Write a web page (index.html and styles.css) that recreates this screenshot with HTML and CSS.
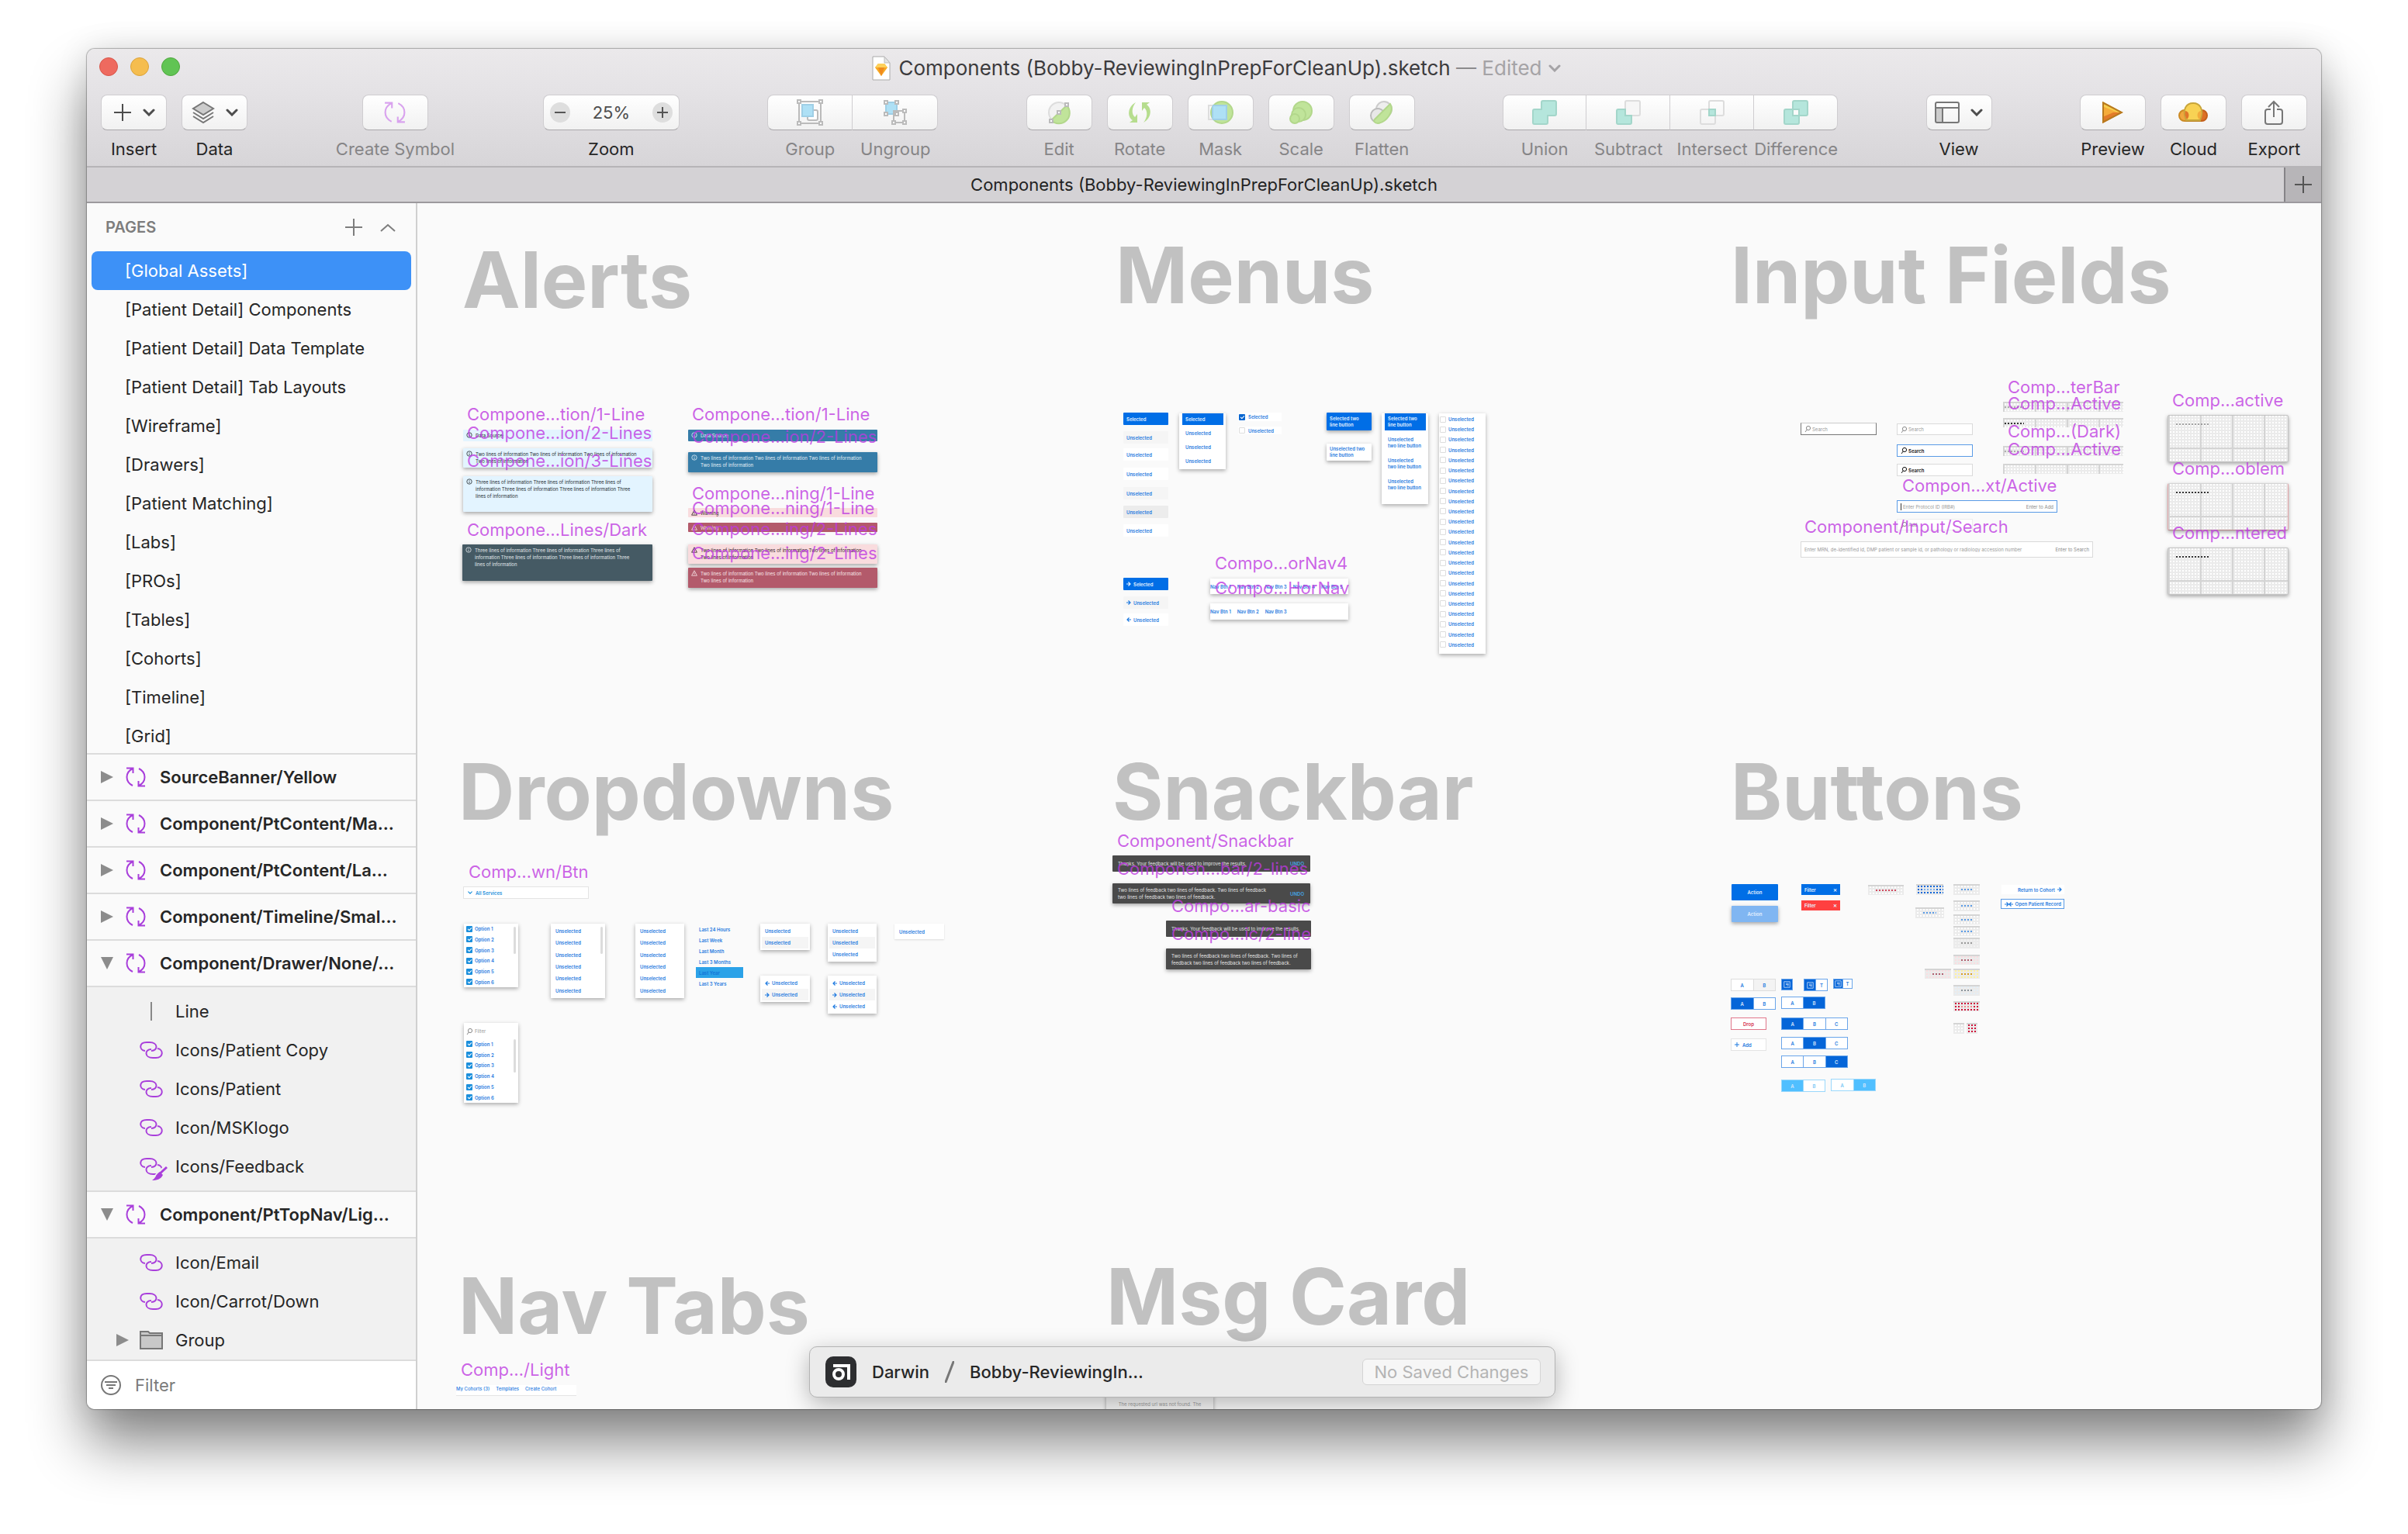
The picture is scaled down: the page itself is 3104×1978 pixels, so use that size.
FILE: index.html
```html
<!DOCTYPE html>
<html lang="en">
<head>
<meta charset="utf-8">
<title>Components (Bobby-ReviewingInPrepForCleanUp).sketch</title>
<link rel="stylesheet" href="styles.css">
</head>
<body>
<svg class="defs" aria-hidden="true">
  <symbol id="i-cycle" viewBox="0 0 26 26"><path d="M9 24C-1 19-1 7 9 2M1 1.500H9.500V8M17 2c10 5 10 17 0 22M25 24.500H16.500V18" fill="none" stroke="currentColor" stroke-width="2"/></symbol>
  <symbol id="i-link" viewBox="0 0 30 24"><path d="M7 13C-1 12-1 2 9 2h4c11 0 11 11 2 11M23 10c8 1 8 12-2 12h-4C6 22 6 11 15 11" fill="none" stroke="currentColor" stroke-width="2"/></symbol>
  <symbol id="i-chev" viewBox="0 0 16 10"><path d="M2 2l6 6 6-6" fill="none" stroke="currentColor" stroke-width="3" stroke-linecap="round"/></symbol>
  <symbol id="i-plus" viewBox="0 0 24 24"><path d="M12 1v22M1 12h22" fill="none" stroke="currentColor" stroke-width="2"/></symbol>
  <symbol id="i-tri" viewBox="0 0 16 16"><path d="M0 0l16 8-16 8z" fill="currentColor"/></symbol>
  <symbol id="i-info" viewBox="0 0 10 10"><circle cx="5" cy="5" r="4" fill="none" stroke="currentColor"/><path d="M5 4.500V7.500M5 2.500v1" stroke="currentColor"/></symbol>
  <symbol id="i-warn" viewBox="0 0 10 10"><path d="M5 1l4.300 8H.7zM5 4v2.500M5 7.200v.8" fill="none" stroke="currentColor"/></symbol>
  <symbol id="i-find" viewBox="0 0 8 10"><circle cx="5" cy="4" r="2.600" fill="none" stroke="currentColor"/><path d="M3.200 6L1 9" stroke="currentColor"/></symbol>
  <symbol id="i-right" viewBox="0 0 6 6"><path d="M0 3h5M2.500.5L5 3 2.500 5.500" fill="none" stroke="currentColor" stroke-width="1.200"/></symbol>
  <symbol id="i-left" viewBox="0 0 6 6"><path d="M6 3H1M3.500.5L1 3l2.500 2.500" fill="none" stroke="currentColor" stroke-width="1.200"/></symbol>
  <symbol id="i-doc" viewBox="0 0 12 12"><path d="M1 1h10v10H1zM4 4h5M4 6h5M6 8h3" fill="none" stroke="currentColor"/></symbol>
</svg>

<div class="window">
  <header class="titlebar">
    <div class="lights"><button class="light red" aria-label="Close"></button><button class="light yellow" aria-label="Minimize"></button><button class="light green" aria-label="Zoom window"></button></div>
    <h1 class="title">
      <svg width="24" height="32" viewBox="0 0 24 32"><path d="M1 1h15l7 8v22H1z" fill="#fff" stroke="#aaa"/><path d="M16 1v8h7z" fill="#e4e4e4" stroke="#bbb"/><path d="M8 10h8l4 5-8 11-8-11z" fill="#f7a823"/><path d="M8 10h8l4 5H4z" fill="#fdd05a"/><path d="M8 15h8l-4 11z" fill="#f08a1d"/></svg>
      <span>Components (Bobby-ReviewingInPrepForCleanUp).sketch <span class="edited"><b>—</b> Edited</span></span>
      <svg class="edited" width="16" height="10"><use href="#i-chev"/></svg>
    </h1>
  </header>

  <div class="toolbar" role="toolbar" aria-label="Tools">
    <div class="cluster">
      <div class="tool"><button class="tb" id="t1"><svg width="24" height="24"><use href="#i-plus"/></svg><svg width="16" height="10"><use href="#i-chev"/></svg></button><label for="t1">Insert</label></div>
      <div class="tool"><button class="tb" id="t2"><svg width="30" height="30" viewBox="0 0 30 30" fill="none" stroke="#777" stroke-width="2"><path d="M15 2l13 8-13 8-13-8z" fill="#ccc"/><path d="M2 15l13 8 13-8M2 20l13 8 13-8"/></svg><svg width="16" height="10"><use href="#i-chev"/></svg></button><label for="t2">Data</label></div>
    </div>
    <div class="tool off wide"><button class="tb purple" id="t3"><svg width="28" height="28"><use href="#i-cycle"/></svg></button><label for="t3">Create Symbol</label></div>
    <div class="tool"><div class="tb zoom"><button class="round" aria-label="Zoom out"><svg width="14" height="14"><path d="M0 7h14" stroke="#555" stroke-width="2"/></svg></button><output>25%</output><button class="round" aria-label="Zoom in"><svg width="14" height="14"><path d="M0 7h14M7 0v14" stroke="#555" stroke-width="2"/></svg></button></div><span>Zoom</span></div>
    <div class="segs">
      <div class="tool off"><button class="tb" id="t4"><svg width="34" height="34" viewBox="0 0 34 34" fill="#fff" stroke="#bbb" stroke-width="2"><path d="M3 3h28v28H3z" fill="none"/><rect x="14" y="14" width="13" height="13" rx="2"/><rect x="7" y="7" width="14" height="15" fill="#aee0f5" stroke="#9fcfe6"/><path d="M1 1h4v4H1zM29 1h4v4h-4zM1 29h4v4H1zM29 29h4v4h-4z"/></svg></button><label for="t4">Group</label></div>
      <div class="tool off"><button class="tb" id="t5"><svg width="34" height="34" viewBox="0 0 34 34" fill="#fff" stroke="#bbb" stroke-width="2"><rect x="5" y="4" width="14" height="15" fill="#aee0f5" stroke="#9fcfe6"/><path d="M15 15h14v15H15z" fill="none"/><path d="M3 2h4v4H3zM17 2h4v4h-4zM3 17h4v4H3zM17 17h4v4h-4zM27 13h4v4h-4zM13 28h4v4h-4zM27 28h4v4h-4z"/></svg></button><label for="t5">Ungroup</label></div>
    </div>
    <div class="cluster">
      <div class="tool off"><button class="tb" id="t6"><svg width="32" height="32" viewBox="0 0 32 32" stroke-width="2"><circle cx="16" cy="16" r="13" fill="#f2f2f2" stroke="#ddd"/><path d="M26 7A13 13 0 0 1 6 26z" fill="#c0e49a" stroke="#b2d78b"/><path d="M4 25h4v4H4zM24 4h4v4h-4zM14 14h4v4h-4z" fill="#fff" stroke="#bbb"/></svg></button><label for="t6">Edit</label></div>
      <div class="tool off"><button class="tb" id="t7"><svg width="32" height="32" viewBox="0 0 32 32" fill="#b6dd8e"><path d="M11 3C0 9 0 22 7 26l-4 3h10V18l-3 4C5 18 6 9 11 3zM21 29c11-6 11-19 4-23l4-3H19v11l3-4c5 4 4 13-1 19z"/></svg></button><label for="t7">Rotate</label></div>
      <div class="tool off"><button class="tb" id="t8"><svg width="36" height="32" viewBox="0 0 36 32" stroke-width="2"><circle cx="20" cy="16" r="14" fill="#c0e49a" stroke="#b2d78b"/><path d="M8 7h18v18H8z" fill="#aee0f5" stroke="#9fcfe6"/><path d="M8 7H3v18h5" fill="none" stroke="#ddd"/></svg></button><label for="t8">Mask</label></div>
      <div class="tool off"><button class="tb" id="t9"><svg width="32" height="32" viewBox="0 0 32 32" fill="#c0e49a" stroke="#b2d78b" stroke-width="2"><circle cx="18" cy="14" r="12"/><circle cx="13" cy="19" r="9"/><circle cx="8" cy="24" r="6"/></svg></button><label for="t9">Scale</label></div>
      <div class="tool off"><button class="tb" id="t10"><svg width="32" height="32" viewBox="0 0 32 32" stroke-width="2"><circle cx="19" cy="12" r="10" fill="#eee" stroke="#ccc"/><circle cx="11" cy="20" r="9" fill="#e8e8e8" stroke="#bbb"/><path d="M27 5c6 9-5 24-16 25-4 0-6-3-4-5z" fill="#c0e49a" stroke="#b2d78b"/></svg></button><label for="t10">Flatten</label></div>
    </div>
    <div class="segs bool">
      <div class="tool off"><button class="tb" id="t11"><svg width="32" height="32" viewBox="0 0 32 32"><path d="M12 3q0-2 2-2h15q2 0 2 2v15q0 2-2 2h-9v9q0 2-2 2H3q-2 0-2-2V14q0-2 2-2h9z" fill="#b5e6dc" stroke="#a3d6ca" stroke-width="2"/></svg></button><label for="t11">Union</label></div>
      <div class="tool off"><button class="tb" id="t12"><svg width="32" height="32" viewBox="0 0 32 32"><rect x="12" y="1" width="19" height="19" rx="2" fill="#f6f6f6" stroke="#ddd" stroke-width="2"/><path d="M12 12v8h8v9q0 2-2 2H3q-2 0-2-2V14q0-2 2-2z" fill="#b5e6dc" stroke="#a3d6ca" stroke-width="2"/></svg></button><label for="t12">Subtract</label></div>
      <div class="tool off"><button class="tb" id="t13"><svg width="32" height="32" viewBox="0 0 32 32" fill="none" stroke="#ddd" stroke-width="2"><rect x="12" y="1" width="19" height="19" rx="2"/><rect x="1" y="12" width="19" height="19" rx="2"/><path d="M12 12h8v8h-8z" fill="#b5e6dc" stroke="#a3d6ca"/></svg></button><label for="t13">Intersect</label></div>
      <div class="tool off"><button class="tb" id="t14"><svg width="32" height="32" viewBox="0 0 32 32" fill="#b5e6dc" stroke="#a3d6ca" stroke-width="2"><rect x="12" y="1" width="19" height="19" rx="2"/><rect x="1" y="12" width="19" height="19" rx="2"/><path d="M12 12h8v8h-8z" fill="#fafafa"/></svg></button><label for="t14">Difference</label></div>
    </div>
    <div class="tool"><button class="tb" id="t15"><svg width="32" height="28" viewBox="0 0 32 28" fill="none" stroke="#777" stroke-width="2"><path d="M1 8h8v19H1z" fill="#ccc" stroke="none"/><rect x="1" y="1" width="30" height="26" rx="2"/><path d="M1 8h30M10 8v19"/></svg><svg width="16" height="10"><use href="#i-chev"/></svg></button><label for="t15">View</label></div>
    <div class="cluster">
      <div class="tool"><button class="tb" id="t16"><svg width="28" height="28" viewBox="0 0 28 28"><path d="M1 0l26 14L1 28z" fill="#f5ac3a"/><path d="M1 0l26 14h-6L1 6z" fill="#f8cf4c"/><path d="M1 28v-8l14-6h12z" fill="#dd6f26" opacity=".8"/><path d="M2 1.500L26 14 2 26.500z" fill="none" stroke="#b87a1e" stroke-width="2"/></svg></button><label for="t16">Preview</label></div>
      <div class="tool"><button class="tb" id="t17"><svg width="38" height="26" viewBox="0 0 38 26" stroke-width="2"><circle cx="8" cy="17" r="7" fill="#f0a63e" stroke="#cc8a24"/><circle cx="30" cy="17" r="7" fill="#dd6f26" stroke="#c4601c"/><path d="M9 24h20" stroke="#c0882a"/><path d="M10 23C4 8 11 1 19 1s15 7 9 22z" fill="#f8d254" stroke="#c8a53a"/><path d="M11 22C8 17 8 14 9 11c5 1 6 7 2 11z" fill="#e0762a"/><path d="M27 22c3-5 3-8 2-11-5 1-6 7-2 11z" fill="#f3ab3c"/></svg></button><label for="t17">Cloud</label></div>
      <div class="tool"><button class="tb" id="t18"><svg width="24" height="32" viewBox="0 0 24 32" fill="none" stroke="#777" stroke-width="2"><path d="M8 12H4q-3 0-3 3v13q0 3 3 3h16q3 0 3-3V15q0-3-3-3h-4M12 22V2M5 9l7-7 7 7"/></svg></button><label for="t18">Export</label></div>
    </div>
  </div>

  <div class="tabs"><button class="tab">Components (Bobby-ReviewingInPrepForCleanUp).sketch</button><button class="newtab" aria-label="New tab"><svg width="24" height="24"><use href="#i-plus"/></svg></button></div>

  <div class="main">
    <aside class="side">
      <div class="pages-head"><h2>PAGES</h2><button aria-label="Add page"><svg width="24" height="24"><use href="#i-plus"/></svg></button><button aria-label="Collapse pages"><svg width="20" height="12" viewBox="0 0 20 12"><path d="M1 11l9-8 9 8" fill="none" stroke="currentColor" stroke-width="2"/></svg></button></div>
      <nav class="pages" aria-label="Pages">
        <a href="#" class="on">[Global Assets]</a><a href="#">[Patient Detail] Components</a><a href="#">[Patient Detail] Data Template</a><a href="#">[Patient Detail] Tab Layouts</a><a href="#">[Wireframe]</a><a href="#">[Drawers]</a><a href="#">[Patient Matching]</a><a href="#">[Labs]</a><a href="#">[PROs]</a><a href="#">[Tables]</a><a href="#">[Cohorts]</a><a href="#">[Timeline]</a><a href="#">[Grid]</a>
      </nav>
      <div class="layers">
        <button class="sym"><svg class="tri"><use href="#i-tri"/></svg><svg class="cyc"><use href="#i-cycle"/></svg>SourceBanner/Yellow</button>
        <button class="sym"><svg class="tri"><use href="#i-tri"/></svg><svg class="cyc"><use href="#i-cycle"/></svg>Component/PtContent/Ma…</button>
        <button class="sym"><svg class="tri"><use href="#i-tri"/></svg><svg class="cyc"><use href="#i-cycle"/></svg>Component/PtContent/La…</button>
        <button class="sym"><svg class="tri"><use href="#i-tri"/></svg><svg class="cyc"><use href="#i-cycle"/></svg>Component/Timeline/Smal…</button>
        <button class="sym"><svg class="tri open"><use href="#i-tri"/></svg><svg class="cyc"><use href="#i-cycle"/></svg>Component/Drawer/None/…</button>
        <div class="kids">
          <button><svg class="lk" viewBox="0 0 30 24"><path d="M15 0v24" stroke="#888" stroke-width="2"/></svg>Line</button>
          <button><svg class="lk"><use href="#i-link"/></svg>Icons/Patient Copy</button>
          <button><svg class="lk"><use href="#i-link"/></svg>Icons/Patient</button>
          <button><svg class="lk"><use href="#i-link"/></svg>Icon/MSKlogo</button>
          <button><svg class="lk" viewBox="0 0 30 24" overflow="visible"><use href="#i-link" width="30" height="24"/><path d="M35 13L17 31" stroke="#f1f1f1" stroke-width="8"/><path d="M35 13L22 25" stroke="currentColor" stroke-width="3"/><path d="M26 19l4 4c-3 6-8 7-14 7 5-3 5-8 10-11z" fill="currentColor"/></svg>Icons/Feedback</button>
        </div>
        <button class="sym"><svg class="tri open"><use href="#i-tri"/></svg><svg class="cyc"><use href="#i-cycle"/></svg>Component/PtTopNav/Lig…</button>
        <div class="kids">
          <button><svg class="lk"><use href="#i-link"/></svg>Icon/Email</button>
          <button><svg class="lk"><use href="#i-link"/></svg>Icon/Carrot/Down</button>
          <button class="group"><svg class="tri"><use href="#i-tri"/></svg><svg class="lk" viewBox="0 0 30 24" fill="#c8c8c8" stroke="#777" stroke-width="2"><path d="M1 23V1h10l2 2h16v20zM1 6h28"/></svg>Group</button>
        </div>
      </div>
      <label class="filter"><svg width="26" height="26" viewBox="0 0 26 26" fill="none" stroke="#777" stroke-width="2"><circle cx="13" cy="13" r="12"/><path d="M5 9h16M7 13h12M10 17h6"/></svg><input type="text" placeholder="Filter" aria-label="Filter"></label>
    </aside>

    <main class="canvas">
      <div class="world">
        <h2 style="--x:596;--y:397">Alerts</h2>
        <h2 style="--x:1438;--y:391">Menus</h2>
        <h2 style="--x:2231;--y:391">Input Fields</h2>
        <h2 style="--x:591;--y:1057">Dropdowns</h2>
        <h2 style="--x:1434;--y:1057">Snackbar</h2>
        <h2 style="--x:2231;--y:1057">Buttons</h2>
        <h2 style="--x:591;--y:1720">Nav Tabs</h2>
        <h2 style="--x:1426;--y:1708">Msg Card</h2>

        <!-- Alerts -->
        <div class="alert sky" style="--x:597;--y:554;--w:244;--h:15"><svg><use href="#i-info"/></svg><p>Data Source:</p></div>
        <div class="alert sky lift" style="--x:597;--y:578;--w:244;--h:25"><svg><use href="#i-info"/></svg><p>Two lines of information Two lines of information Two lines of information<br>Two lines of information</p></div>
        <div class="alert sky lift" style="--x:597;--y:614;--w:244;--h:46"><svg><use href="#i-info"/></svg><p>Three lines of information Three lines of information Three lines of<br>information Three lines of information Three lines of information Three<br>lines of information</p></div>
        <div class="alert slate lift" style="--x:596;--y:702;--w:245;--h:47"><svg><use href="#i-info"/></svg><p>Three lines of information Three lines of information Three lines of<br>information Three lines of information Three lines of information Three<br>lines of information</p></div>
        <div class="alert ocean" style="--x:887;--y:554;--w:244;--h:15"><svg><use href="#i-info"/></svg><p>Data Source:</p></div>
        <div class="alert ocean lift" style="--x:887;--y:583;--w:244;--h:26"><svg><use href="#i-info"/></svg><p>Two lines of information Two lines of information Two lines of information<br>Two lines of information</p></div>
        <div class="alert pink slim" style="--x:887;--y:655;--w:244;--h:12"><svg><use href="#i-warn"/></svg><p>Warning</p></div>
        <div class="alert rose slim" style="--x:887;--y:674;--w:244;--h:12"><svg><use href="#i-warn"/></svg><p>Warning</p></div>
        <div class="alert pink lift" style="--x:887;--y:702;--w:244;--h:25"><svg><use href="#i-warn"/></svg><p>Two lines of information Two lines of information Two lines of information<br>Two lines of information</p></div>
        <div class="alert rose lift" style="--x:887;--y:732;--w:244;--h:26"><svg><use href="#i-warn"/></svg><p>Two lines of information Two lines of information Two lines of information<br>Two lines of information</p></div>
        <div class="name" style="--x:602;--y:542">Compone…tion/1-Line</div>
        <div class="name" style="--x:602;--y:566">Compone…ion/2-Lines</div>
        <div class="name" style="--x:602;--y:602">Compone…ion/3-Lines</div>
        <div class="name" style="--x:602;--y:691">Compone…Lines/Dark</div>
        <div class="name" style="--x:892;--y:542">Compone…tion/1-Line</div>
        <div class="name" style="--x:892;--y:571">Compone…ion/2-Lines</div>
        <div class="name" style="--x:892;--y:644">Compone…ning/1-Line</div>
        <div class="name" style="--x:892;--y:663">Compone…ning/1-Line</div>
        <div class="name" style="--x:892;--y:690">Compone…ing/2-Lines</div>
        <div class="name" style="--x:892;--y:721">Compone…ing/2-Lines</div>

        <!-- Menus -->
        <button class="opt sel" style="--x:1448;--y:532;--w:58;--h:16">Selected</button>
        <button class="opt g1" style="--x:1448;--y:556;--w:58;--h:16">Unselected</button>
        <button class="opt" style="--x:1448;--y:578;--w:58;--h:16">Unselected</button>
        <button class="opt" style="--x:1448;--y:603;--w:58;--h:16">Unselected</button>
        <button class="opt g1" style="--x:1448;--y:628;--w:58;--h:16">Unselected</button>
        <button class="opt g2" style="--x:1448;--y:652;--w:58;--h:16">Unselected</button>
        <button class="opt" style="--x:1448;--y:676;--w:58;--h:16">Unselected</button>
        <div class="card menu" style="--x:1520;--y:533;--w:60;--h:72"><button class="sel">Selected</button><button>Unselected</button><button>Unselected</button><button>Unselected</button></div>
        <label class="tick white" style="--x:1596;--y:532;--w:56;--h:11"><input type="checkbox" checked>Selected</label>
        <label class="tick white" style="--x:1596;--y:550;--w:56;--h:10"><input type="checkbox">Unselected</label>
        <button class="opt two sel lift" style="--x:1710;--y:532;--w:58;--h:23">Selected two<br>line button</button>
        <button class="opt two lift" style="--x:1710;--y:572;--w:58;--h:22">Unselected two<br>line button</button>
        <div class="card menu tall" style="--x:1781;--y:533;--w:60;--h:117"><button class="sel">Selected two<br>line button</button><button>Unselected<br>two line button</button><button>Unselected<br>two line button</button><button>Unselected<br>two line button</button></div>
        <div class="card checks long" style="--x:1855;--y:533;--w:60;--h:310">
          <label><input type="checkbox">Unselected</label><label><input type="checkbox">Unselected</label><label><input type="checkbox">Unselected</label><label><input type="checkbox">Unselected</label><label><input type="checkbox">Unselected</label><label><input type="checkbox">Unselected</label><label><input type="checkbox">Unselected</label><label><input type="checkbox">Unselected</label><label><input type="checkbox">Unselected</label><label><input type="checkbox">Unselected</label><label><input type="checkbox">Unselected</label><label><input type="checkbox">Unselected</label><label><input type="checkbox">Unselected</label><label><input type="checkbox">Unselected</label><label><input type="checkbox">Unselected</label><label><input type="checkbox">Unselected</label><label><input type="checkbox">Unselected</label><label><input type="checkbox">Unselected</label><label><input type="checkbox">Unselected</label><label><input type="checkbox">Unselected</label><label><input type="checkbox">Unselected</label><label><input type="checkbox">Unselected</label><label><input type="checkbox">Unselected</label>
        </div>
        <button class="opt sel" style="--x:1448;--y:745;--w:58;--h:16"><svg><use href="#i-right"/></svg>Selected</button>
        <button class="opt g1" style="--x:1448;--y:769;--w:58;--h:16"><svg><use href="#i-right"/></svg>Unselected</button>
        <button class="opt" style="--x:1448;--y:791;--w:58;--h:16"><svg><use href="#i-left"/></svg>Unselected</button>
        <div class="card hnav" style="--x:1560;--y:746;--w:178;--h:20"><a href="#">Nav Btn 1</a><a href="#">Nav Btn 2</a><a href="#">Nav Btn 3</a><a href="#">Nav Btn 4</a><a href="#">Nav Btn 5</a></div>
        <div class="card hnav" style="--x:1560;--y:778;--w:178;--h:21"><a href="#">Nav Btn 1</a><a href="#">Nav Btn 2</a><a href="#">Nav Btn 3</a></div>
        <div class="name" style="--x:1566;--y:734">Compo…orNav4</div>
        <div class="name" style="--x:1566;--y:766">Compo…HorNav</div>

        <!-- Input fields -->
        <div class="field dark" style="--x:2321;--y:545;--w:98;--h:16"><svg><use href="#i-find"/></svg><input placeholder="Search" aria-label="Search"></div>
        <div class="field" style="--x:2445;--y:546;--w:98;--h:15"><svg><use href="#i-find"/></svg><input placeholder="Search" aria-label="Search"></div>
        <div class="field focus ink" style="--x:2445;--y:573;--w:98;--h:16"><svg><use href="#i-find"/></svg><input value="Search" aria-label="Search"></div>
        <div class="field ink" style="--x:2445;--y:598;--w:98;--h:16"><svg><use href="#i-find"/></svg><input value="Search" aria-label="Search"></div>
        <div class="field focus" style="--x:2445;--y:645;--w:207;--h:16"><i class="caret"></i><input placeholder="Enter Protocol ID (IRB#)" aria-label="Protocol ID"><span>Enter to Add</span></div>
        <div class="field faint" style="--x:2445;--y:669;--w:98;--h:15"><svg><use href="#i-find"/></svg><input placeholder="Add" aria-label="Add"></div>
        <div class="field" style="--x:2321;--y:698;--w:377;--h:21"><input placeholder="Enter MRN, de-identified id, DMP patient or sample id, or pathology or radiology accession number" aria-label="Patient search"><span>Enter to Search</span></div>
        <div class="mesh cols" style="--x:2582;--y:518;--w:155;--h:13"><i class="dash soft"></i></div>
        <div class="mesh cols" style="--x:2582;--y:539;--w:155;--h:12"><i class="dash"></i></div>
        <div class="mesh cols" style="--x:2582;--y:575;--w:155;--h:13"><i class="dash soft"></i></div>
        <div class="mesh cols" style="--x:2582;--y:598;--w:155;--h:13"></div>
        <div class="mesh cols box lift" style="--x:2794;--y:535;--w:156;--h:61"><i class="dash soft"></i></div>
        <div class="mesh cols box lift bad" style="--x:2794;--y:623;--w:156;--h:61"><i class="dash"></i></div>
        <div class="mesh cols box lift" style="--x:2794;--y:706;--w:156;--h:61"><i class="dash"></i></div>
        <div class="name" style="--x:2588;--y:507">Comp…terBar</div>
        <div class="name" style="--x:2588;--y:528">Comp…Active</div>
        <div class="name" style="--x:2588;--y:564">Comp…(Dark)</div>
        <div class="name" style="--x:2588;--y:587">Comp…Active</div>
        <div class="name" style="--x:2452;--y:634">Compon…xt/Active</div>
        <div class="name" style="--x:2326;--y:687">Component/Input/Search</div>
        <div class="name" style="--x:2800;--y:524">Comp…active</div>
        <div class="name" style="--x:2800;--y:612">Comp…oblem</div>
        <div class="name" style="--x:2800;--y:695">Comp…ntered</div>

        <!-- Dropdowns -->
        <div class="name" style="--x:604;--y:1132">Comp…wn/Btn</div>
        <button class="ddbtn" style="--x:597;--y:1143;--w:162;--h:16"><svg width="6" height="4"><use href="#i-chev"/></svg>All Services</button>
        <div class="card checks opts bar" style="--x:598;--y:1191;--w:70;--h:82"><label><input type="checkbox" checked>Option 1</label><label><input type="checkbox" checked>Option 2</label><label><input type="checkbox" checked>Option 3</label><label><input type="checkbox" checked>Option 4</label><label><input type="checkbox" checked>Option 5</label><label><input type="checkbox" checked>Option 6</label></div>
        <div class="card list bar" style="--x:710;--y:1191;--w:70;--h:96"><button>Unselected</button><button>Unselected</button><button>Unselected</button><button>Unselected</button><button>Unselected</button><button>Unselected</button></div>
        <div class="card list" style="--x:819;--y:1191;--w:63;--h:96"><button>Unselected</button><button>Unselected</button><button>Unselected</button><button>Unselected</button><button>Unselected</button><button>Unselected</button></div>
        <div class="ranges" style="--x:897;--y:1192;--w:61;--h:83"><button>Last 24 Hours</button><button>Last Week</button><button>Last Month</button><button>Last 3 Months</button><button class="cur">Last Year</button><button>Last 3 Years</button></div>
        <div class="card list" style="--x:980;--y:1191;--w:64;--h:34"><button>Unselected</button><button class="g1">Unselected</button></div>
        <div class="card list" style="--x:1067;--y:1191;--w:63;--h:49"><button>Unselected</button><button class="g1">Unselected</button><button>Unselected</button></div>
        <div class="card list flat" style="--x:1153;--y:1191;--w:64;--h:20"><button>Unselected</button></div>
        <div class="card list" style="--x:980;--y:1258;--w:64;--h:34"><button><svg><use href="#i-left"/></svg>Unselected</button><button class="g1"><svg><use href="#i-right"/></svg>Unselected</button></div>
        <div class="card list" style="--x:1067;--y:1258;--w:63;--h:49"><button><svg><use href="#i-left"/></svg>Unselected</button><button class="g1"><svg><use href="#i-right"/></svg>Unselected</button><button><svg><use href="#i-left"/></svg>Unselected</button></div>
        <div class="card checks opts bar low" style="--x:598;--y:1319;--w:70;--h:103"><div class="find"><svg><use href="#i-find"/></svg><input placeholder="Filter" aria-label="Filter options"></div><label><input type="checkbox" checked>Option 1</label><label><input type="checkbox" checked>Option 2</label><label><input type="checkbox" checked>Option 3</label><label><input type="checkbox" checked>Option 4</label><label><input type="checkbox" checked>Option 5</label><label><input type="checkbox" checked>Option 6</label></div>

        <!-- Snackbar -->
        <div class="snack" style="--x:1434;--y:1103;--w:255;--h:21"><p>Thanks. Your feedback will be used to improve the results.</p><button>UNDO</button></div>
        <div class="snack lift" style="--x:1434;--y:1139;--w:255;--h:26"><p>Two lines of feedback two lines of feedback. Two lines of feedback<br>two lines of feedback two lines of feedback.</p><button>UNDO</button></div>
        <div class="snack" style="--x:1503;--y:1187;--w:187;--h:21"><p>Thanks. Your feedback will be used to improve the results.</p></div>
        <div class="snack lift" style="--x:1503;--y:1223;--w:187;--h:27"><p>Two lines of feedback two lines of feedback. Two lines of<br>feedback two lines of feedback two lines of feedback.</p></div>
        <div class="name" style="--x:1440;--y:1092">Component/Snackbar</div>
        <div class="name" style="--x:1440;--y:1128">Componen…bar/2-lines</div>
        <div class="name" style="--x:1510;--y:1176">Compo…ar-basic</div>
        <div class="name" style="--x:1510;--y:1212">Compo…ic/2-line</div>

        <!-- Buttons -->
        <button class="act" style="--x:2232;--y:1140;--w:60;--h:21">Action</button>
        <button class="act dim lift" style="--x:2232;--y:1168;--w:60;--h:21">Action</button>
        <button class="chip" style="--x:2322;--y:1140;--w:50;--h:14">Filter<span>✕</span></button>
        <button class="chip hot" style="--x:2322;--y:1161;--w:50;--h:13">Filter<span>✕</span></button>
        <div class="mesh red-t" style="--x:2408;--y:1141;--w:46;--h:13"><i class="dash mid"></i></div>
        <div class="mesh blue-b" style="--x:2470;--y:1140;--w:35;--h:14"><i class="dash mid"></i></div>
        <div class="mesh blue-t" style="--x:2469;--y:1170;--w:37;--h:14"><i class="dash mid"></i></div>
        <div class="mesh blue-t" style="--x:2518;--y:1140;--w:34;--h:14"><i class="dash mid"></i></div>
        <div class="mesh blue-t" style="--x:2518;--y:1161;--w:34;--h:14"><i class="dash mid"></i></div>
        <div class="mesh blue-t" style="--x:2518;--y:1179;--w:34;--h:13"><i class="dash mid"></i></div>
        <div class="mesh blue-t" style="--x:2518;--y:1194;--w:34;--h:13"><i class="dash mid"></i></div>
        <div class="mesh grey-t" style="--x:2518;--y:1209;--w:34;--h:14"><i class="dash mid"></i></div>
        <div class="mesh pink-b" style="--x:2518;--y:1231;--w:34;--h:13"><i class="dash mid"></i></div>
        <div class="mesh pink-b" style="--x:2481;--y:1249;--w:34;--h:13"><i class="dash mid"></i></div>
        <div class="mesh gold-b" style="--x:2518;--y:1249;--w:34;--h:13"><i class="dash mid"></i></div>
        <div class="mesh ice-b" style="--x:2518;--y:1270;--w:34;--h:14"><i class="dash mid"></i></div>
        <div class="mesh red-b" style="--x:2518;--y:1291;--w:34;--h:13"><i class="dash mid"></i></div>
        <div class="mesh red-t" style="--x:2518;--y:1319;--w:14;--h:14"></div>
        <div class="mesh red-b" style="--x:2535;--y:1319;--w:14;--h:14"></div>
        <button class="link" style="--x:2580;--y:1141;--w:81;--h:12">Return to Cohort<svg><use href="#i-right"/></svg></button>
        <button class="link line" style="--x:2579;--y:1159;--w:82;--h:13"><svg><use href="#i-right"/></svg><svg><use href="#i-left"/></svg>Open Patient Record</button>
        <div class="seg grey" style="--x:2231;--y:1262;--w:58;--h:16"><button>A</button><button class="on">B</button></div>
        <div class="seg" style="--x:2231;--y:1286;--w:58;--h:16"><button class="on">A</button><button>B</button></div>
        <div class="seg" style="--x:2296;--y:1262;--w:15;--h:15"><button class="on" aria-label="Document"><svg><use href="#i-doc"/></svg></button></div>
        <div class="seg" style="--x:2325;--y:1262;--w:31;--h:16"><button class="on" aria-label="Document"><svg><use href="#i-doc"/></svg></button><button>T</button></div>
        <div class="seg" style="--x:2363;--y:1262;--w:25;--h:13"><button class="on" aria-label="Document"><svg><use href="#i-doc"/></svg></button><button>T</button></div>
        <div class="seg" style="--x:2296;--y:1285;--w:57;--h:16"><button>A</button><button class="on">B</button></div>
        <div class="seg" style="--x:2296;--y:1312;--w:86;--h:16"><button class="on">A</button><button>B</button><button>C</button></div>
        <div class="seg" style="--x:2296;--y:1337;--w:86;--h:16"><button>A</button><button class="on">B</button><button>C</button></div>
        <div class="seg" style="--x:2296;--y:1361;--w:86;--h:16"><button>A</button><button>B</button><button class="on">C</button></div>
        <div class="seg light-blue" style="--x:2296;--y:1392;--w:57;--h:16"><button class="on">A</button><button>B</button></div>
        <div class="seg light-blue" style="--x:2360;--y:1391;--w:58;--h:16"><button>A</button><button class="on">B</button></div>
        <button class="small drop" style="--x:2231;--y:1312;--w:46;--h:16">Drop</button>
        <button class="small add" style="--x:2231;--y:1339;--w:46;--h:16"><svg width="6" height="6" viewBox="0 0 6 6"><path d="M3 0v6M0 3h6" stroke="currentColor"/></svg>Add</button>

        <!-- Nav tabs and message card -->
        <div class="name" style="--x:594;--y:1774">Comp…/Light</div>
        <div class="navtabs" style="--x:588;--y:1786;--w:155;--h:14"><a href="#">My Cohorts (3)</a><a href="#">Templates</a><a href="#">Create Cohort</a></div>
        <div class="msg lift" style="--x:1426;--y:1740;--w:138;--h:120">The requested url was not found. The</div>
      </div>

      <div class="status">
        <svg width="40" height="40" viewBox="0 0 40 40"><rect width="40" height="40" rx="10" fill="#2d2e30"/><path d="M10 12h20v18" fill="none" stroke="#fff" stroke-width="4"/><circle cx="17" cy="23" r="6" fill="none" stroke="#fff" stroke-width="4"/></svg>
        <b>Darwin</b>
        <svg width="12" height="28"><path d="M1 27L11 1" stroke="#777" stroke-width="3" stroke-linecap="round"/></svg>
        <b>Bobby-ReviewingIn…</b>
        <button disabled>No Saved Changes</button>
      </div>
    </main>
  </div>
</div>
</body>
</html>
```
FILE: styles.css
```css
* { box-sizing: border-box; }

body {
  margin: 0;
  min-height: 100vh;
  padding: 63px 112px 161px;
  display: flex;
  background: #fff;
  color: #262626;
  font: 22px/28px Inter, "Liberation Sans", sans-serif;
}

button, input {
  margin: 0;
  padding: 0;
  border: 0;
  background: none;
  color: inherit;
  font: inherit;
}

h1, h2, p { margin: 0; font-weight: 400; }
a { color: inherit; text-decoration: none; }
svg { flex: none; display: block; }
.defs { position: absolute; width: 0; height: 0; }

/* Window frame */
.window {
  flex: 1;
  min-width: 0;
  display: flex;
  flex-direction: column;
  overflow: hidden;
  border-radius: 10px;
  background: #fafafa;
  box-shadow: 0 0 1px 1px rgba(0, 0, 0, .28), 0 44px 72px rgba(0, 0, 0, .48), 0 0 40px rgba(0, 0, 0, .1);
}

.titlebar {
  position: relative;
  height: 50px;
  display: flex;
  align-items: center;
  justify-content: center;
  background: linear-gradient(#ebe9eb, #e5e3e6);
}

.lights {
  position: absolute;
  left: 16px;
  top: 11px;
  display: flex;
  gap: 16px;
}
.light { width: 24px; height: 24px; border-radius: 50%; border: 1px solid; }
.red { background: #ee6a5f; border-color: #d95549; }
.yellow { background: #f5bd4f; border-color: #dba33b; }
.green { background: #61c454; border-color: #50a73f; }

.title {
  padding-left: 32px;
  display: flex;
  align-items: center;
  gap: 10px;
  font-size: 26px;
  color: #3c3b3d;
}
.edited { color: #a5a3a6; }
.edited b { font-weight: 400; color: #8b8a8c; }
svg.edited { margin-left: -2px; }

.toolbar {
  height: 103px;
  padding: 9px 18px 0;
  display: flex;
  justify-content: space-between;
  align-items: flex-start;
  border-bottom: 2px solid #b6b4b7;
  background: linear-gradient(#e5e3e6, #d7d5d8);
}
.cluster { display: flex; gap: 19px; }
.segs { display: flex; }
.tool {
  width: 85px;
  display: flex;
  flex-direction: column;
  align-items: center;
  gap: 10px;
  white-space: nowrap;
}
.tool.wide { width: 154px; }
.tool:has(.zoom) { width: 176px; }
.segs .tool { width: 110px; }
.bool .tool { width: 108px; }
.tb {
  width: 85px;
  height: 46px;
  display: flex;
  align-items: center;
  justify-content: center;
  gap: 14px;
  border: 1px solid #cfcdd0;
  border-bottom-color: #a9a7aa;
  border-radius: 8px;
  background: linear-gradient(#fff, #f1f1f1);
  color: #4d4d4d;
}
.tb.zoom { width: 176px; padding: 0 8px; justify-content: space-between; }
.segs .tb { width: 100%; border-radius: 0; border-left-width: 0; }
.segs .tool:first-child .tb { border-radius: 8px 0 0 8px; border-left-width: 1px; }
.segs .tool:last-child .tb { border-radius: 0 8px 8px 0; }
.tb.purple { color: #d9a3ee; }
.off { color: #868587; }
.round {
  width: 26px;
  height: 26px;
  display: grid;
  place-items: center;
  border-radius: 50%;
  background: #dedede;
}

.tabs {
  height: 46px;
  display: flex;
  border-bottom: 2px solid #9c999d;
  background: #d4d2d5;
  color: #222;
}
.tab { flex: 1; padding-left: 48px; }
.newtab {
  width: 48px;
  display: grid;
  place-items: center;
  border-left: 2px solid #858387;
  background: #b7b5b8;
  color: #555;
}

.main { flex: 1; min-height: 0; display: flex; }

/* Sidebar */
.side {
  width: 426px;
  display: flex;
  flex-direction: column;
  border-right: 2px solid #d0d0d0;
}
.side button { text-align: left; }
.pages-head {
  height: 62px;
  padding: 0 26px 0 24px;
  display: flex;
  align-items: center;
  gap: 22px;
  color: #7d7d7d;
}
.pages-head h2 { flex: 1; font-size: 20px; font-weight: 600; }
.pages { flex: 0 0 647px; overflow: hidden; padding: 0 6px; }
.pages a {
  height: 50px;
  padding-left: 43px;
  display: flex;
  align-items: center;
  border-radius: 8px;
}
.pages .on { background: #3d91f7; color: #fff; }

.layers { flex: 1; display: flex; flex-direction: column; }
.sym {
  height: 60px;
  padding-left: 18px;
  display: flex;
  align-items: center;
  border-top: 2px solid #dcdcdc;
  font-weight: 600;
}
.tri { width: 16px; height: 16px; color: #8c8c8c; }
.open { transform: rotate(90deg); }
.cyc { width: 26px; height: 26px; margin: 0 18px 0 16px; color: #a93fdb; }
.kids {
  padding: 6px 0;
  border-top: 2px solid #dcdcdc;
  background: #f1f1f1;
}
.kids:last-child { padding-bottom: 0; }
.kids button {
  width: 100%;
  height: 50px;
  padding-left: 68px;
  display: flex;
  align-items: center;
  gap: 16px;
}
.kids .group { padding-left: 38px; gap: 14px; }
.kids .group .lk { margin-right: 2px; }
.lk { width: 30px; height: 24px; color: #a93fdb; }
.filter {
  height: 64px;
  padding-left: 18px;
  display: flex;
  align-items: center;
  gap: 18px;
  border-top: 2px solid #dcdcdc;
  background: #fff;
}
.filter input { flex: 1; min-width: 0; }
.filter input::placeholder { color: #7b7b7b; opacity: 1; }

/* Canvas: every artboard is placed by its document coordinates */
.canvas { position: relative; flex: 1; min-width: 0; overflow: hidden; }
.world {
  position: absolute;
  left: -538px;
  top: -262px;
  color: #1f7ae0;
  font-size: 6px;
  line-height: 9px;
}
.world > * {
  position: absolute;
  left: calc(var(--x) * 1px);
  top: calc(var(--y) * 1px);
  width: calc(var(--w) * 1px);
  height: calc(var(--h) * 1px);
  white-space: nowrap;
}
.world > h2 {
  margin-top: -96px;
  width: auto;
  height: auto;
  color: #c1c1c1;
  font-size: 100px;
  font-weight: 700;
  line-height: 120px;
}
.world > .name {
  margin-top: -22px;
  width: auto;
  height: auto;
  color: rgba(190, 57, 225, .79);
  font-size: 22px;
  line-height: 28px;
}
.world button, .world label, .world a { font-weight: 600; text-align: left; }
.lift { box-shadow: 0 2px 5px rgba(0, 0, 0, .35); }

.alert { display: flex; gap: 4px; padding: 3px 4px; border-radius: 1px; }
.alert svg { width: 8px; height: 8px; }
.slim { padding-top: 2px; }
.sky { background: #e3f4ff; color: #20282d; }
.slate { background: #455a64; color: #e4e9ec; }
.ocean { background: #357ca8; color: #e6f1f7; }
.pink { background: #f9dcde; color: #302022; }
.rose { background: #b35a6b; color: #f8e6e9; }

.opt {
  padding-left: 4px;
  display: flex;
  align-items: center;
  gap: 3px;
  border-radius: 1px;
  background: #fff;
}
.opt svg, .list svg, .link svg { width: 6px; height: 6px; }
.two { line-height: 8px; }
.world .sel { background: #006ee6; color: #e6f1ff; }
.world .g1 { background: #f5f5f5; }
.world .g2 { background: #ececec; }

.card {
  background: #fff;
  box-shadow: 0 2px 5px rgba(0, 0, 0, .32);
  display: flex;
  flex-direction: column;
}
.card.flat { box-shadow: 0 1px 2px rgba(0, 0, 0, .12); }
.menu { padding: 0 3px 0 4px; gap: 3px; }
.menu button { height: 15px; padding-left: 4px; }
.tall { line-height: 8px; gap: 5px; }
.tall button { height: 22px; }

.tick, .checks label { display: flex; align-items: center; gap: 3px; }
.tick { padding-left: 1px; gap: 4px; }
.white { background: #fff; }
.world input[type="checkbox"] {
  appearance: none;
  width: 8px;
  height: 8px;
  border: 1px solid #ddd;
  border-radius: 1px;
  background: #fff;
}
.world input[type="checkbox"]:checked { border: 0; background: #0a66d0; }
.world input[type="checkbox"]:checked::before {
  content: "";
  display: block;
  width: 4px;
  height: 2px;
  margin: 2px;
  border: solid #fff;
  border-width: 0 0 1px 1px;
  transform: rotate(-45deg);
}
.world .opts input[type="checkbox"]:checked { background: #1b8fdc; }
.long { padding: 3px 1px 7px; justify-content: space-between; }
.opts { padding: 2px 3px; justify-content: space-between; }
.find { display: flex; gap: 3px; height: 16px; padding-top: 4px; color: #888; }
.find svg { width: 8px; height: 10px; }
.find input { width: 30px; height: 9px; }
.bar::after {
  content: "";
  position: absolute;
  right: 3px;
  top: 4px;
  width: 3px;
  height: 35px;
  border-radius: 2px;
  background: #dcdcdc;
}
.low::after { top: 21px; height: 43px; }

.hnav, .navtabs { flex-direction: row; align-items: center; gap: 8px; }
.ddbtn {
  padding-left: 5px;
  display: flex;
  align-items: center;
  gap: 4px;
  border: 1px solid #e4e4e4;
  background: #fff;
  color: #1b8fdc;
}
.list { padding: 2px; }
.list button { flex: 1; display: flex; align-items: center; gap: 3px; padding-left: 4px; }
.ranges { display: flex; flex-direction: column; }
.ranges button { flex: 1; padding-left: 4px; }
.ranges .cur { background: #2ba2e8; color: #1272d6; }

.field {
  padding: 0 4px;
  display: flex;
  align-items: center;
  gap: 2px;
  border: 1px solid #dadada;
  background: #fff;
  color: #8a8a8a;
}
.field svg { width: 8px; height: 10px; }
.field input { flex: 1; min-width: 0; height: 9px; }
.world input::placeholder { color: #9a9a9a; opacity: 1; }
.dark { border-color: #ccc #777 #777; }
.focus { border-color: #5a9be6; }
.ink { color: #111; font-weight: 600; }
.faint { border-color: #ececec; }
.caret { width: 1px; height: 9px; background: #333; }

/* Pixel mesh shown by artboards drawn at low zoom */
.mesh {
  --dot: #fff;
  --ink: #333;
  border-top: 2px solid #d4d4d4;
  background:
    repeating-linear-gradient(to right, #ebebeb 0 2px, transparent 2px 4px),
    repeating-linear-gradient(to bottom, transparent 0 2px, #ebebeb 2px 4px),
    var(--dot);
}
.cols {
  background:
    repeating-linear-gradient(to right, #d4d4d4 0 2px, transparent 2px 41px),
    repeating-linear-gradient(to right, #ebebeb 0 2px, transparent 2px 4px),
    repeating-linear-gradient(to bottom, transparent 0 2px, #ebebeb 2px 4px),
    #fff;
}
.box {
  border: 1px solid #c4c4c4;
  border-radius: 2px;
  background:
    linear-gradient(#d4d4d4, #d4d4d4) 0 41px / 100% 2px no-repeat,
    repeating-linear-gradient(to right, #d4d4d4 0 2px, transparent 2px 41px),
    repeating-linear-gradient(to right, #ebebeb 0 2px, transparent 2px 4px),
    repeating-linear-gradient(to bottom, transparent 0 2px, #ebebeb 2px 4px),
    #fff;
}
.bad { border-color: #d4d4d4 #e5a5a9 #b98a8a; }
.dash {
  display: block;
  width: 25px;
  height: 2px;
  margin: 4px 2px;
  background: repeating-linear-gradient(to right, var(--ink) 0 2px, transparent 2px 4px);
}
.box .dash { width: 44px; margin: 10px; }
.dash.mid { width: auto; margin: 4px 10px; }
.soft { opacity: .4; }
.red-t { --ink: #d0485e; }
.red-b { --dot: #cf1238; --ink: #e88; }
.blue-b { --dot: #0a66d8; --ink: #7ab0ee; }
.blue-t { --ink: #5a9be6; }
.grey-t { --dot: #f3f3f3; --ink: #999; }
.pink-b { --dot: #fbdde0; --ink: #b06070; }
.gold-b { --dot: #fff3a0; --ink: #d8a020; }
.ice-b { --dot: #e4eff7; --ink: #8a959c; }

.snack {
  padding: 0 8px 0 7px;
  display: flex;
  align-items: center;
  justify-content: space-between;
  border-radius: 1px;
  background: #4a4a4a;
  color: #e4e4e4;
}
.snack button { color: #45a5e6; }

.world .act { border-radius: 1px; background: #006ee6; color: #e6f1ff; text-align: center; }
.world .dim { background: #80b6f2; }
.chip {
  padding: 0 4px;
  display: flex;
  align-items: center;
  justify-content: space-between;
  background: #006ee6;
  color: #e6f1ff;
}
.hot { background: #ff4040; }
.link {
  padding: 0 3px;
  display: flex;
  align-items: center;
  justify-content: flex-end;
  gap: 3px;
  background: #fff;
}
.line { border: 1px solid #5a9be6; }
.line svg + svg { margin-left: -4px; }

.seg { display: flex; border: 1px solid #6aa5ea; background: #fff; }
.world .seg button { flex: 1; text-align: center; display: grid; place-items: center; }
.seg button + button { border-left: 1px solid #6aa5ea; }
.seg .on { background: #0565d8; color: #d5e6fb; }
.seg svg { width: 9px; height: 9px; }
.seg.grey, .grey button + button { border-color: #ddd; }
.grey .on { background: #f3f3f3; color: inherit; }
.seg.light-blue, .light-blue button + button { border-color: #9ad8fb; }
.light-blue { color: #7cc8f5; }
.light-blue .on { background: #50bfff; }
.small { display: flex; align-items: center; gap: 4px; padding: 0 4px; border: 1px solid #e4e4e4; background: #fff; }
.drop { justify-content: center; border-color: #e0768a; color: #d5304f; }

.navtabs { display: flex; align-items: flex-start; border-bottom: 1px solid #e4e4e4; background: #fff; }
.navtabs a { font-weight: 500; }
.msg { padding: 66px 10px 0; background: #f6f6f6; color: #999; text-align: center; }

/* Version bar floating over the canvas */
.status {
  position: absolute;
  left: 505px;
  bottom: 15px;
  width: 962px;
  height: 66px;
  padding: 0 18px 0 20px;
  display: flex;
  align-items: center;
  gap: 20px;
  border: 1px solid #b4b4b4;
  border-radius: 10px;
  background: #ebebeb;
  box-shadow: 0 8px 30px rgba(0, 0, 0, .28);
}
.status b { font-weight: 500; }
.status button {
  width: 230px;
  height: 34px;
  margin-left: auto;
  border: 1px solid #d4d4d4;
  border-radius: 6px;
  background: #f6f6f6;
  color: #b4b4b4;
}
```
